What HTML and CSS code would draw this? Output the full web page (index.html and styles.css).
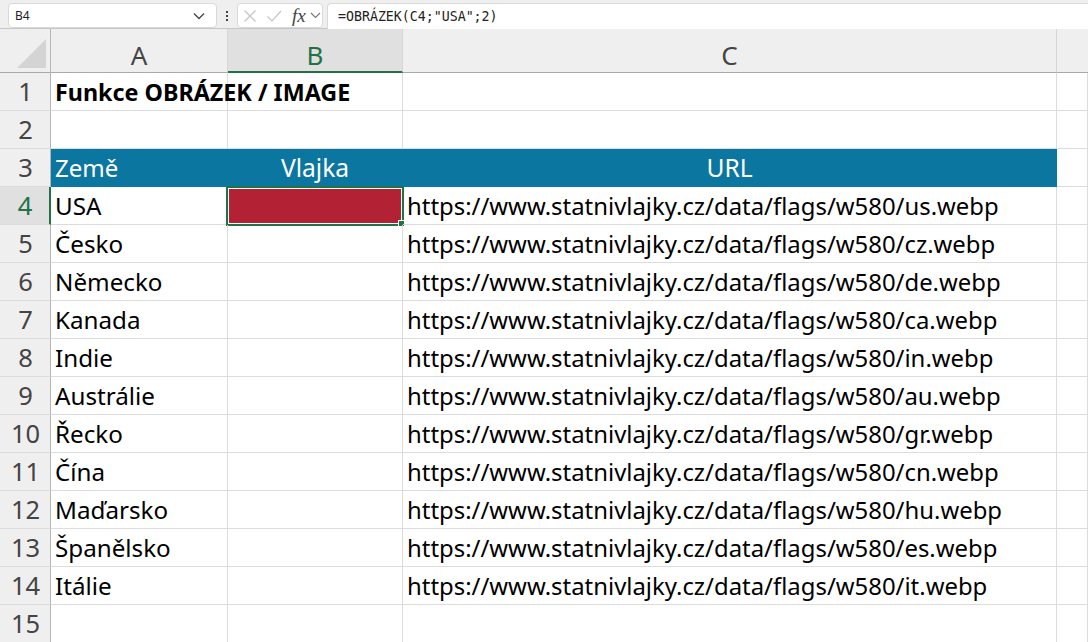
FILE: index.html
```html
<!DOCTYPE html>
<html lang="cs">
<head>
<meta charset="utf-8">
<title>Funkce OBRÁZEK / IMAGE</title>
<link rel="stylesheet" href="styles.css">
</head>
<body>
<div class="formula-bar">
  <div class="name-box"><span>B4</span>
    <svg class="chev" width="14" height="8" viewBox="0 0 14 8"><path d="M2 1.5 7 6.5 12 1.5" fill="none" stroke="#444" stroke-width="1.3"/></svg>
  </div>
  <div class="dots"><i></i><i></i><i></i></div>
  <div class="fx-box">
    <svg width="14" height="14" viewBox="0 0 14 14"><path d="M1.5 1.5 12.5 12.5M12.5 1.500 1.500 12.500" fill="none" stroke="#c4c4c4" stroke-width="1.2"/></svg>
    <svg width="16" height="14" viewBox="0 0 16 14"><path d="M1.5 7.5 6 12 15 2" fill="none" stroke="#c4c4c4" stroke-width="1.2"/></svg>
    <span class="fx">fx</span>
    <svg width="11" height="7" viewBox="0 0 11 7"><path d="M1 1 5.500 5.500 10 1" fill="none" stroke="#777" stroke-width="1.1"/></svg>
  </div>
  <div class="input">=OBRÁZEK(C4;"USA";2)</div>
</div>
<div class="sheet">
  <div class="corner"><svg width="29" height="29" viewBox="0 0 29 29"><path d="M29 0V29H0Z" fill="#d4d4d4"/></svg></div>
  <div class="col">A</div><div class="col sel">B</div><div class="col">C</div><div class="col end"></div>

  <div class="row">1</div><div class="cell bold">Funkce OBRÁZEK / IMAGE</div><div class="cell"></div><div class="cell"></div><div class="cell"></div>
  <div class="row">2</div><div class="cell"></div><div class="cell"></div><div class="cell"></div><div class="cell"></div>
  <div class="row">3</div><div class="cell head">Země</div><div class="cell head mid">Vlajka</div><div class="cell head mid">URL</div><div class="cell"></div>
  <div class="row sel">4</div><div class="cell">USA</div><div class="cell active"><div class="flag"></div><span class="handle"></span></div><div class="cell url">https://www.statnivlajky.cz/data/flags/w580/us.webp</div><div class="cell"></div>
  <div class="row">5</div><div class="cell">Česko</div><div class="cell"></div><div class="cell url">https://www.statnivlajky.cz/data/flags/w580/cz.webp</div><div class="cell"></div>
  <div class="row">6</div><div class="cell">Německo</div><div class="cell"></div><div class="cell url">https://www.statnivlajky.cz/data/flags/w580/de.webp</div><div class="cell"></div>
  <div class="row">7</div><div class="cell">Kanada</div><div class="cell"></div><div class="cell url">https://www.statnivlajky.cz/data/flags/w580/ca.webp</div><div class="cell"></div>
  <div class="row">8</div><div class="cell">Indie</div><div class="cell"></div><div class="cell url">https://www.statnivlajky.cz/data/flags/w580/in.webp</div><div class="cell"></div>
  <div class="row">9</div><div class="cell">Austrálie</div><div class="cell"></div><div class="cell url">https://www.statnivlajky.cz/data/flags/w580/au.webp</div><div class="cell"></div>
  <div class="row">10</div><div class="cell">Řecko</div><div class="cell"></div><div class="cell url">https://www.statnivlajky.cz/data/flags/w580/gr.webp</div><div class="cell"></div>
  <div class="row">11</div><div class="cell">Čína</div><div class="cell"></div><div class="cell url">https://www.statnivlajky.cz/data/flags/w580/cn.webp</div><div class="cell"></div>
  <div class="row">12</div><div class="cell">Maďarsko</div><div class="cell"></div><div class="cell url">https://www.statnivlajky.cz/data/flags/w580/hu.webp</div><div class="cell"></div>
  <div class="row">13</div><div class="cell">Španělsko</div><div class="cell"></div><div class="cell url">https://www.statnivlajky.cz/data/flags/w580/es.webp</div><div class="cell"></div>
  <div class="row">14</div><div class="cell">Itálie</div><div class="cell"></div><div class="cell url">https://www.statnivlajky.cz/data/flags/w580/it.webp</div><div class="cell"></div>
  <div class="row">15</div><div class="cell"></div><div class="cell"></div><div class="cell"></div><div class="cell"></div>
</div>
</body>
</html>
```
FILE: styles.css
```css
* { box-sizing: border-box; }
html, body { margin: 0; height: 100%; overflow: hidden; background: #fff; }
body { font-family: "Noto Sans", sans-serif; color: #000; }

.formula-bar {
  height: 29px;
  background: #efefef;
  display: flex;
  align-items: stretch;
  border-bottom: 1px solid #c6c6c6;
  padding: 3px 0 0 8px;
}
.name-box {
  width: 209px; height: 25px;
  background: #fff;
  border: 1px solid #d9d9d9;
  border-radius: 4px;
  display: flex; align-items: center; justify-content: space-between;
  padding: 0 10px 0 6px;
  font-size: 12px; color: #222;
}
.dots { width: 20px; display: flex; flex-direction: column; align-items: center; justify-content: center; gap: 2px; height: 25px; }
.dots i { width: 2px; height: 2px; background: #444; display: block; }
.fx-box {
  width: 86px; height: 25px;
  background: #fff;
  border: 1px solid #d9d9d9;
  border-radius: 4px;
  display: flex; align-items: center; gap: 9px;
  padding-left: 5px;
}
.fx { font-family: "Liberation Serif", serif; font-style: italic; font-size: 19px; color: #444; width: 15px; margin-left: 1px; margin-right: -6px; }
.input {
  flex: 1; margin-left: 4px; height: 26px;
  background: #fff;
  border: 1px solid #d9d9d9; border-right: 0; border-bottom: 0;
  border-radius: 4px 0 0 0;
  padding-left: 10px;
  font-family: "DejaVu Sans Mono", monospace;
  font-size: 13.25px; line-height: 26px; color: #222;
}

.sheet {
  display: grid;
  grid-template-columns: 51px 177px 175px 654px 1fr;
  grid-template-rows: 44px repeat(15, 38px);
}
.corner { background: #efefef; border-right: 1px solid #b5b5b5; border-bottom: 1px solid #a9a9a9; display: flex; align-items: flex-end; justify-content: flex-end; padding: 0 4px 4px 0; }
.col {
  background: #efefef;
  border-bottom: 1px solid #a9a9a9;
  border-right: 1px solid #d6d6d6;
  display: flex; align-items: center; justify-content: center;
  padding-top: 9px;
  font-size: 26px; line-height: 1; color: #444;
}
.col.sel { background: #e0e0e0; color: #217346; border-bottom: 2px solid #217346; padding-top: 10px; }
.col.end { border-right: 0; }
.row {
  background: #efefef;
  border-right: 1px solid #b5b5b5;
  border-bottom: 1px solid #dcdcdc;
  display: flex; align-items: center; justify-content: center;
  font-size: 25.5px; line-height: 1; color: #444;
  padding-left: 1px;
}
.row.sel { background: #e0e0e0; color: #217346; border-right: 2px solid #217346; }
.cell {
  position: relative;
  border-right: 1px solid #dcdcdc;
  border-bottom: 1px solid #dcdcdc;
  padding: 0 0 0 4px;
  font-size: 24.2px; line-height: 38px;
  white-space: nowrap;
}
.bold { font-weight: 700; font-size: 23.3px; }
.url { padding-left: 4px; font-size: 23.9px; }
.head { background: #0b76a0; color: #fff; border-color: #0b76a0; font-size: 24px; }
.head.mid { text-align: center; padding-left: 0; font-size: 24.6px; }
.active { padding: 0; }
.flag { position: absolute; left: -2px; top: -1px; right: -2px; bottom: -2px; border: 2px solid #217346; background: #b22234; box-shadow: inset 0 0 0 1px #fff; }
.handle { position: absolute; right: -3px; bottom: -3px; width: 7px; height: 7px; background: #217346; border: 1px solid #fff; }
```
